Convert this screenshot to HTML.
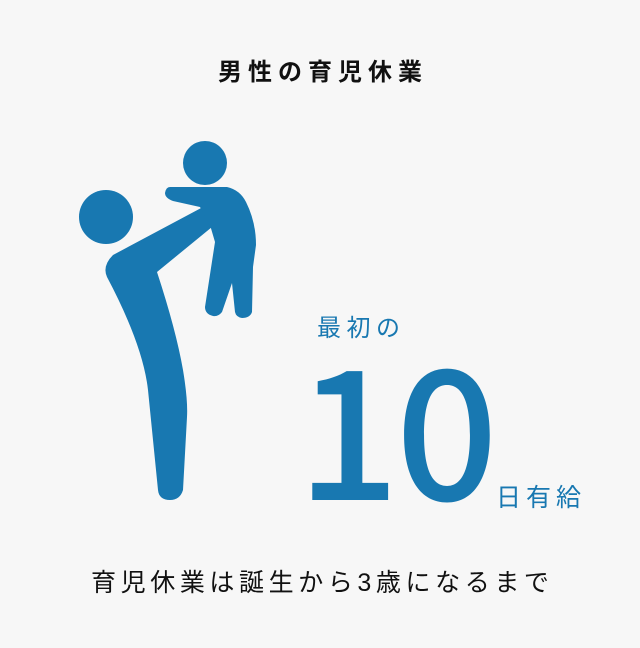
<!DOCTYPE html>
<html><head><meta charset="utf-8"><style>
body{margin:0;width:640px;height:648px;background:#f7f7f7;position:relative;overflow:hidden;font-family:"Liberation Sans","Noto Sans CJK JP",sans-serif;}
.t{position:absolute;white-space:nowrap;}
</style></head><body>
<div class="t" style="left:0;width:640px;text-align:center;top:52px;font-size:24px;font-weight:bold;color:#111;letter-spacing:6px;text-indent:6px;">男性の育児休業</div>
<svg style="position:absolute;left:0;top:0" width="640" height="648">
<g fill="#1878b1">
<circle cx="106" cy="217" r="27"/>
<circle cx="205" cy="163" r="22"/>
<path d="M113 255 L203 207 L212 227 L157 272 Q176 330 183 370 Q188 400 187 417 L183 490 Q180 500 170 500 Q159 500 158 490 L148 390 Q143 345 107 277 Q102 266 113 255 Z"/>
<path d="M170 187 L227 187 Q240 190 246 202 Q256 222 256 245 L253 267 L252 312 Q250 318 242 318 Q236 317 235 312 L232 283 L222 312 Q218 317 213 316 Q205 314 205 307 L215 242 L210 225 L200 207 L173 201 Q165 198 165 193 Q166 187 170 187 Z"/>
</g>
</svg>
<div class="t" style="left:317px;top:308px;font-size:24px;color:#1878b1;letter-spacing:5.5px;">最初の</div>
<div class="t" style="left:297px;top:332px;font-size:180px;line-height:180px;color:#1878b1;font-weight:500;font-family:'Noto Sans CJK JP',sans-serif;letter-spacing:-4px;">10</div>
<div class="t" style="left:496px;top:478px;font-size:25px;color:#1878b1;letter-spacing:5px;">日有給</div>
<div class="t" style="left:0;width:640px;text-align:center;top:563px;font-size:25px;color:#111;letter-spacing:4.6px;text-indent:4.6px;">育児休業は誕生から3歳になるまで</div>
</body></html>
